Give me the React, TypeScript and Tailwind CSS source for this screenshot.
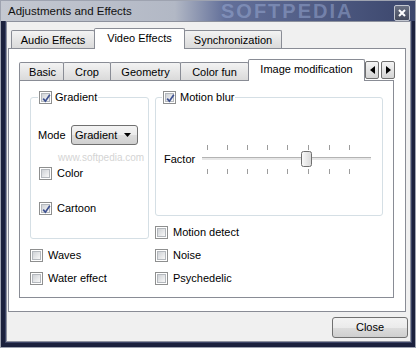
import clsx from "clsx";

const ticks = [6, 26, 46, 66, 86, 107, 128, 148];

const Check = ({ checked }: { checked?: boolean }) => {
  return (
    <span className="relative flex h-[13px] w-[13px] shrink-0 items-center justify-center border border-[#8e8f8f] bg-white">
      <span className="h-[9px] w-[9px] border border-[#b4b8bd] bg-gradient-to-br from-[#cfd2d6] to-[#f8f8f8]" />
      {checked && (
        <svg className="absolute left-[1px] top-[1px]" width="11" height="11" viewBox="0 0 11 11">
          <path d="M2.2 5.6 L4.4 8.2 L8.8 1.8" fill="none" stroke="#3e5190" strokeWidth="1.7" />
        </svg>
      )}
    </span>
  );
};

const CheckRow = ({ label, checked, className }: { label: string; checked?: boolean; className?: string }) => {
  return (
    <div className={clsx("flex h-[13px] items-center gap-[5px] leading-none", className)}>
      <Check checked={checked} />
      <span>{label}</span>
    </div>
  );
};

const Tab = ({ label, selected, first, className }: { label: string; selected?: boolean; first?: boolean; className: string }) => {
  return (
    <div
      className={clsx(
        "flex shrink-0 items-center justify-center whitespace-nowrap rounded-t-[2px] border border-b-0 border-[#898c95] leading-none",
        !first && "-ml-[1px]",
        selected ? "relative z-10 -mb-[1px] bg-white" : "bg-gradient-to-b from-[#f3f3f3] to-[#dadada]",
        className
      )}
    >
      {label}
    </div>
  );
};

const Arrow = ({ left }: { left?: boolean }) => {
  return (
    <div className="flex h-[18px] w-[14px] shrink-0 items-center justify-center rounded-[2px] border border-[#707070] bg-gradient-to-b from-[#f4f4f4] to-[#d4d4d4]">
      <svg width="5" height="8" viewBox="0 0 5 8">
        <path d={left ? "M5 0 L0 4 L5 8 Z" : "M0 0 L5 4 L0 8 Z"} fill="#000" />
      </svg>
    </div>
  );
};

const Slider = () => {
  return (
    <svg width="171" height="30" viewBox="0 0 171 30" className="shrink-0">
      <defs>
        <linearGradient id="thumb" x1="0" y1="0" x2="1" y2="0">
          <stop offset="0" stopColor="#fbfbfb" />
          <stop offset="1" stopColor="#d8d8d8" />
        </linearGradient>
      </defs>
      {ticks.map((x) => (
        <line key={"t" + x} x1={x + 0.5} y1="1" x2={x + 0.5} y2="6" stroke="#9c9c9c" />
      ))}
      {ticks.map((x) => (
        <line key={"b" + x} x1={x + 0.5} y1="25" x2={x + 0.5} y2="30" stroke="#9c9c9c" />
      ))}
      <rect x="1" y="13" width="169" height="1" fill="#b3b3b3" />
      <rect x="1" y="14" width="169" height="2" fill="#e7e7e7" />
      <rect x="100.5" y="7.5" width="10" height="15" rx="2" fill="url(#thumb)" stroke="#6f6f6f" />
    </svg>
  );
};

const App = () => {
  return (
    <div className="relative flex h-[348px] w-[416px] flex-col overflow-hidden border border-[#9ea3b0] bg-[#1b213d] font-['Liberation_Sans',Arial,sans-serif] text-[11px] text-black">
      {/* title bar */}
      <div className="relative flex h-[20px] shrink-0 items-center bg-[linear-gradient(90deg,#c4c8d1_0%,#b2b8c5_42%,#63709a_54%,#3b466c_100%)] pl-[7px] pr-[5px] pt-[2px]">
        <span className="relative z-10 text-[11.5px] text-[#111]">Adjustments and Effects</span>
        <span className="pointer-events-none absolute left-[220px] top-[1px] text-[20px] font-bold leading-[18px] tracking-[2px] text-[#a3b5de]/45">
          SOFTPEDIA
        </span>
        <div className="relative z-10 ml-auto mt-[2px] flex h-[16px] w-[16px] items-center justify-center rounded-[2px] border border-[#c3c7d1] bg-gradient-to-b from-[#6a7184] to-[#444a5c]">
          <svg width="8" height="8" viewBox="0 0 8 8">
            <path d="M1 1 L7 7 M7 1 L1 7" stroke="#fff" strokeWidth="2" />
          </svg>
        </div>
      </div>

      {/* client area */}
      <div className="mb-[5px] ml-[5px] mr-[4px] flex h-[321px] flex-col border border-[#8d919d] bg-[#f0f0f0] shadow-[0_0_0_1px_#3c4466]">
        <div className="ml-[4px] mt-[6px] flex h-[20px] items-end">
          <Tab first label="Audio Effects" className="h-[18px] w-[84px] pt-[1px]" />
          <Tab selected label="Video Effects" className="h-[21px] w-[91px] pb-[1px]" />
          <Tab label="Synchronization" className="h-[18px] w-[98px] pt-[1px]" />
        </div>

        <div className="ml-[1px] mr-[4px] h-[264px] border border-[#898c95] bg-white">
          <div className="ml-[10px] mt-[10px] w-[375px]">
            <div className="flex h-[21px] items-end">
              <Tab first label="Basic" className="h-[18px] w-[45px] pl-[2px] pt-[1px]" />
              <Tab label="Crop" className="h-[18px] w-[48px] pt-[1px]" />
              <Tab label="Geometry" className="h-[18px] w-[71px] pt-[1px]" />
              <Tab label="Color fun" className="h-[18px] w-[69px] pt-[1px]" />
              <Tab selected label="Image modification" className="h-[22px] w-[117px] pb-[2px]" />
              <div className="relative z-20 mb-[1px] flex gap-[2px]">
                <Arrow left />
                <Arrow />
              </div>
            </div>

            <div className="h-[218px] border border-[#898c95] bg-white">
              <div className="ml-[10px] mt-[9px] flex items-start">
                <fieldset className="h-[149px] w-[119px] shrink-0 rounded-[3px] border border-[#d5dfe5]">
                  <legend className="ml-[7px] px-[1px]">
                    <span className="flex h-[15px] items-center gap-[3px] leading-none">
                      <Check checked />
                      Gradient
                    </span>
                  </legend>
                  <div className="mt-[20px] flex h-[20px] items-center pl-[7px]">
                    <span className="w-[33px] leading-none">Mode</span>
                    <div className="flex h-[20px] w-[67px] items-center rounded-[3px] border border-[#707070] bg-[linear-gradient(#f3f3f3,#ebebeb_50%,#dddddd_50%,#cfcfcf)] pl-[3px] pr-[6px] leading-none">
                      <span>Gradient</span>
                      <svg className="ml-auto" width="7" height="4" viewBox="0 0 7 4">
                        <path d="M0 0 H7 L3.5 4 Z" fill="#000" />
                      </svg>
                    </div>
                  </div>
                  <CheckRow label="Color" className="mt-[22px] pl-[8px]" />
                  <CheckRow label="Cartoon" checked className="mt-[22px] pl-[8px]" />
                </fieldset>

                <div className="ml-[6px] flex w-[228px] shrink-0 flex-col">
                  <fieldset className="h-[126px] rounded-[3px] border border-[#d5dfe5]">
                    <legend className="ml-[6px] px-[1px]">
                      <span className="flex h-[15px] items-center gap-[4px] leading-none">
                        <Check checked />
                        Motion blur
                      </span>
                    </legend>
                    <div className="mt-[39px] flex items-center pl-[8px]">
                      <span className="w-[37px] leading-none">Factor</span>
                      <Slider />
                    </div>
                  </fieldset>
                  <CheckRow label="Motion detect" className="mt-[10px]" />
                </div>
              </div>

              <div className="ml-[10px] mt-[10px] grid grid-cols-[125px_1fr] gap-y-[10px]">
                <CheckRow label="Waves" />
                <CheckRow label="Noise" />
                <CheckRow label="Water effect" />
                <CheckRow label="Psychedelic" />
              </div>
            </div>
          </div>
        </div>

        <div className="mt-[5px] flex justify-end pr-[2px]">
          <button className="h-[21px] w-[76px] rounded-[3px] border border-[#707070] bg-[linear-gradient(#f3f3f3,#ebebeb_50%,#dddddd_50%,#cfcfcf)] leading-none">
            Close
          </button>
        </div>
      </div>

      <span className="pointer-events-none absolute left-[57px] top-[152px] text-[10px] leading-none text-[#d4d4d4]">
        www.softpedia.com
      </span>
    </div>
  );
};

export default App;
